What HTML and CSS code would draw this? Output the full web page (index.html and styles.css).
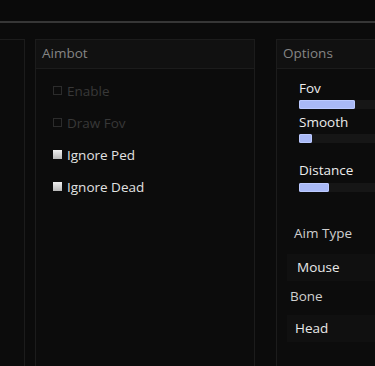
FILE: index.html
```html
<!DOCTYPE html>
<html lang="en">
<head>
  <meta charset="UTF-8">
  <title>Menu - Aimbot</title>
  <link rel="stylesheet" href="styles.css">
</head>
<body>

  <div class="topbar"></div>

  <div class="panels">
    <div class="panel side"></div>

    <div class="panel aimbot">
      <div class="panel-head">Aimbot</div>
      <div class="panel-body">
        <label class="check off"><span class="box"></span>Enable</label>
        <label class="check off"><span class="box"></span>Draw Fov</label>
        <label class="check on"><span class="box"></span>Ignore Ped</label>
        <label class="check on"><span class="box"></span>Ignore Dead</label>
      </div>
    </div>

    <div class="panel options">
      <div class="panel-head">Options</div>
      <div class="panel-body">
        <div class="slider">
          <div class="slider-label">Fov</div>
          <div class="track"><div class="fill" style="width: 56px"></div></div>
        </div>
        <div class="slider">
          <div class="slider-label">Smooth</div>
          <div class="track"><div class="fill" style="width: 13px"></div></div>
        </div>
        <div class="slider distance">
          <div class="slider-label">Distance</div>
          <div class="track"><div class="fill" style="width: 30px"></div></div>
        </div>

        <div class="field-label aim">Aim Type</div>
        <div class="combo">Mouse</div>
        <div class="field-label bone">Bone</div>
        <div class="combo head">Head</div>
      </div>
    </div>
  </div>

</body>
</html>
```

FILE: styles.css
```css
body {
  margin: 0;
  width: 375px;
  height: 366px;
  overflow: hidden;
  background: #0b0b0b;
  font-family: "Open Sans", "Noto Sans", sans-serif;
  font-size: 13px;
}

.topbar {
  height: 21px;
  background: #0a0a0a;
  border-bottom: 2px solid #363636;
  margin-bottom: 16px;
}

.panels {
  display: flex;
  height: 330px;
}

.panel {
  background: #0c0c0c;
  border: 1px solid #1c1c1c;
  border-bottom: none;
  box-sizing: border-box;
}

.side {
  width: 25px;
  border-left: none;
  margin-right: 10px;
}

.aimbot {
  width: 220px;
  margin-right: 21px;
}

.options {
  flex: 1;
  border-right: none;
  min-width: 0;
}

.panel-head {
  height: 28px;
  line-height: 27px;
  padding-left: 6px;
  background: #111111;
  border-bottom: 1px solid #1c1c1c;
  color: #858585;
  font-size: 13.5px;
}

.aimbot .panel-body {
  padding: 11px 0 0 17px;
  display: flex;
  flex-direction: column;
  gap: 11px;
}

.check {
  display: flex;
  align-items: center;
  height: 21px;
  font-size: 13.5px;
}

.box {
  width: 9px;
  height: 9px;
  margin-right: 5px;
  box-sizing: border-box;
}

.off {
  color: #383838;
}

.off .box {
  border: 1px solid #2c2c2c;
}

.on {
  color: #e2e2e2;
}

.on .box {
  background: linear-gradient(#f0f0f0, #b8b8b8);
}

.options .panel-body {
  padding: 9px 0 0 22px;
}

.slider-label {
  color: #ececec;
  font-size: 13.5px;
  height: 20px;
  line-height: 20px;
}

.track {
  height: 9px;
  background: #161616;
  margin: 2px 0 3px;
}

.fill {
  height: 9px;
  background: #a9b9f6;
  border-radius: 2px;
  box-shadow: inset 0 0 0 1px #bccaff;
}

.distance {
  margin-top: 17px;
}

.distance .track {
  margin-top: 3px;
}

.field-label {
  color: #cfcfcf;
  font-size: 13.5px;
  height: 20px;
  line-height: 20px;
}

.field-label.aim {
  margin: 31px 0 0 -5px;
}

.field-label.bone {
  margin: 5px 0 0 -9px;
}

.combo {
  margin: 11px 0 0 -12px;
  height: 27px;
  line-height: 26px;
  padding-left: 10px;
  background: #101010;
  color: #e8e8e8;
  font-size: 13.5px;
}

.combo.head {
  margin-top: 9px;
  padding-left: 8px;
}
```
